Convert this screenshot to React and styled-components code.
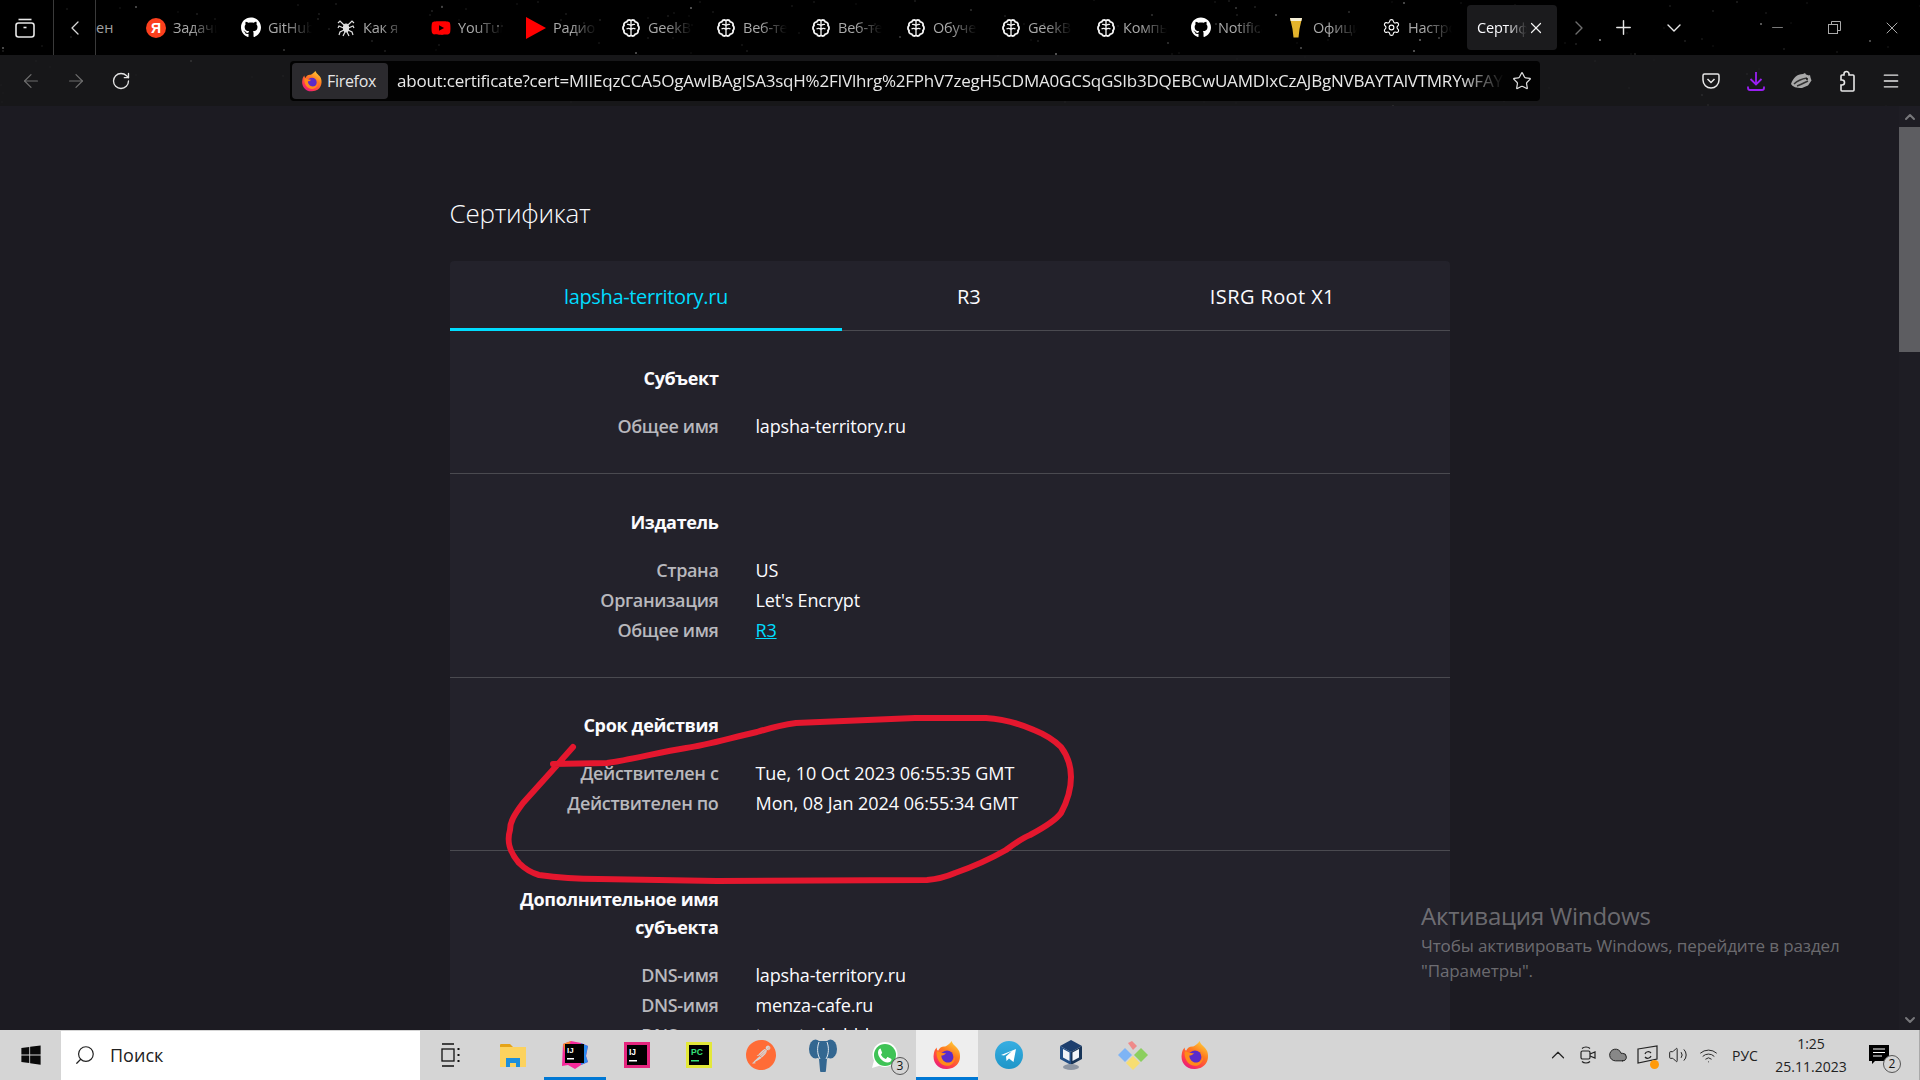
import React from 'react';
import styled, { createGlobalStyle } from 'styled-components';
import {
  ArrowLeft, ArrowRight, RotateCw, Star, Menu, Settings, Plus, X, Minus,
  ChevronLeft, ChevronRight, ChevronDown, ChevronUp, Search, Cloud, Volume2, Wifi,
} from 'lucide-react';
import { FaGithub, FaWindows, FaYoutube } from 'react-icons/fa';
import { SiPostman } from 'react-icons/si';

const makeStars = (count, seed, alpha) => {
  let s = seed;
  const next = () => {
    s = (s * 16807) % 2147483647;
    return s / 2147483647;
  };
  const list = [];
  for (let i = 0; i < count; i++) {
    const x = Math.round(next() * 1920);
    const y = Math.round(next() * 55);
    const r = next() > 0.8 ? 1.4 : 0.8;
    const a = (0.25 + next() * 0.6) * alpha;
    list.push(`radial-gradient(circle ${r}px at ${x}px ${y}px, rgba(255,255,255,${a.toFixed(2)}), transparent)`);
  }
  return list.join(',');
};

const GlobalStyle = createGlobalStyle`
  html, body {
    margin: 0;
    padding: 0;
    background: #1c1b22;
  }
  * {
    box-sizing: border-box;
  }
`;

const Screen = styled.div`
  position: relative;
  display: flex;
  flex-direction: column;
  width: 1920px;
  height: 1080px;
  overflow: hidden;
  font-family: 'Open Sans', 'Liberation Sans', sans-serif;
  color: #fbfbfe;
`;

const TabBar = styled.div`
  display: flex;
  align-items: center;
  height: 55px;
  flex: none;
  background-color: #000;
  background-image: ${makeStars(130, 4711, 1)};
`;

const ManagerSlot = styled.div`
  display: flex;
  align-items: center;
  justify-content: center;
  width: 54px;
  height: 55px;
  padding-right: 4px;
  border-right: 1px solid #3a3a3a;
  flex: none;
`;

const ScrollSlot = styled.div`
  display: flex;
  align-items: center;
  justify-content: center;
  width: 42px;
  height: 55px;
  border-right: 1px solid #3a3a3a;
  flex: none;
  color: #d8d8d8;
`;

const TabStub = styled.div`
  width: 41px;
  flex: none;
  font-size: 14.5px;
  color: #a0a0a0;
  white-space: nowrap;
`;

const Tab = styled.div`
  display: flex;
  align-items: center;
  gap: 7px;
  width: 95px;
  height: 45px;
  flex: none;
  padding-left: 9px;
`;

const TabIcon = styled.div`
  display: flex;
  align-items: center;
  justify-content: center;
  width: 20px;
  height: 24px;
  flex: none;
  color: #fff;
`;

const TabLabel = styled.div`
  width: 44px;
  overflow: hidden;
  white-space: nowrap;
  font-size: 14.5px;
  letter-spacing: -0.2px;
  color: #a8a8a8;
  -webkit-mask-image: linear-gradient(to right, #000 40%, transparent 100%);
  mask-image: linear-gradient(to right, #000 40%, transparent 100%);
`;

const ActiveTab = styled.div`
  display: flex;
  align-items: center;
  width: 90px;
  height: 45px;
  flex: none;
  padding-left: 10px;
  border-radius: 4px;
  background: #1b1b1d;
`;

const ActiveLabel = styled(TabLabel)`
  width: 50px;
  color: #fbfbfe;
  -webkit-mask-image: linear-gradient(to right, #000 60%, transparent 100%);
  mask-image: linear-gradient(to right, #000 60%, transparent 100%);
`;

const BarButton = styled.div`
  display: flex;
  align-items: center;
  justify-content: center;
  width: ${(p) => p.$w || 45}px;
  height: 45px;
  flex: none;
  color: ${(p) => p.$color || '#e8e8e8'};
`;

const WindowControls = styled.div`
  display: flex;
  margin-left: auto;
  color: #c9c9c9;
`;

const NavBar = styled.div`
  display: flex;
  align-items: center;
  height: 51px;
  flex: none;
  background-color: #171719;
  background-image: ${makeStars(60, 1999, 0.25)};
`;

const NavLeft = styled.div`
  display: flex;
  align-items: center;
  width: 290px;
  padding-left: 8px;
  flex: none;
`;

const UrlBar = styled.div`
  display: flex;
  align-items: center;
  width: 1250px;
  height: 40px;
  flex: none;
  padding-left: 2px;
  border-radius: 4px;
  background: #020202;
`;

const IdentityBox = styled.div`
  display: flex;
  align-items: center;
  gap: 4px;
  width: 96px;
  height: 36px;
  flex: none;
  padding-left: 9px;
  border-radius: 4px;
  background: #2b2a2e;
  font-size: 16px;
  letter-spacing: -0.3px;
  color: #e6e6e6;
`;

const UrlText = styled.div`
  width: 1107px;
  margin-left: 9px;
  overflow: hidden;
  white-space: nowrap;
  font-size: 17px;
  letter-spacing: -0.22px;
  color: #e8e8e8;
  -webkit-mask-image: linear-gradient(to right, #000 96%, transparent 100%);
  mask-image: linear-gradient(to right, #000 96%, transparent 100%);
`;

const StarSlot = styled.div`
  display: flex;
  justify-content: center;
  width: 36px;
  flex: none;
  color: #dedede;
`;

const NavRight = styled.div`
  display: flex;
  margin-left: auto;
  padding-right: 7px;
`;

const Viewport = styled.div`
  display: flex;
  flex: 1;
  min-height: 0;
  background: #1c1b22;
`;

const PageScroll = styled.main`
  flex: 1;
  overflow: hidden;
  padding-top: 89px;
`;

const Page = styled.div`
  width: 1000px;
  margin: 0 auto;
`;

const Title = styled.h1`
  margin: 0 0 30px;
  font-size: 26px;
  line-height: 36px;
  font-weight: 300;
  letter-spacing: -0.25px;
  color: #fbfbfe;
`;

const Card = styled.section`
  border-radius: 4px;
  background: #23222b;
`;

const TabList = styled.div`
  display: flex;
  height: 70px;
  border-bottom: 1px solid #4a4a50;
`;

const CertTab = styled.div`
  flex: 1 1 auto;
  display: flex;
  align-items: center;
  justify-content: center;
  height: 70px;
  padding: 3px 10px 0;
  border-bottom: 3px solid ${(p) => (p.$active ? '#00ddff' : 'transparent')};
  font-size: 20px;
  letter-spacing: ${(p) => p.$track}px;
  color: ${(p) => (p.$active ? '#00ddff' : '#fbfbfe')};
`;

const Section = styled.div`
  padding: ${(p) => p.$top || 33}px 0 32px;
  border-bottom: 1px solid #4a4a50;
`;

const SectionTitle = styled.h2`
  width: 269px;
  margin: 0 0 19px;
  font-size: 18px;
  line-height: 28px;
  font-weight: 700;
  text-align: right;
  letter-spacing: -0.35px;
  color: #fbfbfe;
`;

const Row = styled.div`
  display: grid;
  grid-template-columns: 269px 1fr;
  column-gap: 37px;
  height: 30px;
  align-items: center;
  font-size: 18px;
  letter-spacing: -0.17px;
`;

const Label = styled.span`
  font-weight: 600;
  text-align: right;
  letter-spacing: -0.35px;
  color: #b8b8bd;
`;

const Value = styled.span`
  color: #fbfbfe;
`;

const DateValue = styled(Value)`
  letter-spacing: -0.05px;
`;

const ValueLink = styled.a`
  color: #00ddff;
  text-decoration: underline;
`;

const Scrollbar = styled.div`
  display: flex;
  flex-direction: column;
  align-items: center;
  width: 21px;
  flex: none;
  background: #1e1d24;
  color: #77777b;
`;

const ScrollArrow = styled.div`
  display: flex;
  align-items: center;
  justify-content: center;
  height: 21px;
  flex: none;
`;

const ScrollThumb = styled.div`
  width: 100%;
  height: 225px;
  margin-bottom: auto;
  background: #5d5d61;
`;

const Taskbar = styled.footer`
  display: flex;
  align-items: center;
  height: 50px;
  flex: none;
  background: #d5d5d5;
  color: #111;
`;

const StartSlot = styled.div`
  display: flex;
  align-items: center;
  justify-content: center;
  width: 61px;
  height: 50px;
  flex: none;
`;

const SearchBox = styled.div`
  display: flex;
  align-items: center;
  gap: 14px;
  width: 359px;
  height: 49px;
  flex: none;
  padding-left: 13px;
  background: #fff;
  font-size: 18px;
  color: #222;
`;

const SearchGlyph = styled(Search)`
  transform: scaleX(-1);
`;

const TaskSlot = styled.div`
  position: relative;
  display: flex;
  align-items: center;
  justify-content: center;
  width: 62px;
  height: 50px;
  flex: none;
  background: ${(p) => (p.$active ? '#eeeeee' : 'transparent')};
  border-bottom: 3px solid ${(p) => (p.$open ? '#0078d4' : 'transparent')};
  padding-top: 3px;
`;

const CountBadge = styled.span`
  position: absolute;
  right: ${(p) => p.$right}px;
  bottom: ${(p) => p.$bottom}px;
  display: flex;
  align-items: center;
  justify-content: center;
  width: 18px;
  height: 18px;
  border: 1px solid #555;
  border-radius: 50%;
  background: #d5d5d5;
  font-size: 12px;
  line-height: 1;
  color: #111;
`;

const Tray = styled.div`
  display: flex;
  align-items: center;
  margin-left: auto;
  height: 50px;
`;

const TraySlot = styled.div`
  position: relative;
  display: flex;
  align-items: center;
  justify-content: center;
  width: 30px;
  height: 50px;
  flex: none;
  color: #222;
`;

const TrayDot = styled.span`
  position: absolute;
  right: 4px;
  bottom: 11px;
  width: 9px;
  height: 9px;
  border-radius: 50%;
  background: #ff9a0a;
`;

const LangSlot = styled.div`
  width: 44px;
  flex: none;
  font-size: 14px;
  text-align: center;
  color: #222;
`;

const Clock = styled.div`
  width: 88px;
  flex: none;
  font-size: 14px;
  line-height: 23px;
  text-align: center;
  color: #222;
`;

const NotifySlot = styled.div`
  position: relative;
  display: flex;
  align-items: center;
  width: 65px;
  height: 50px;
  flex: none;
  padding-left: 14px;
  border-right: 1px solid #aaa;
`;

const Watermark = styled.div`
  position: absolute;
  left: 1421px;
  top: 899px;
  color: rgba(255, 255, 255, 0.36);
`;

const WatermarkTitle = styled.div`
  font-size: 24px;
  line-height: 34px;
  letter-spacing: -0.2px;
`;

const WatermarkText = styled.div`
  width: 440px;
  font-size: 17px;
  line-height: 25px;
  letter-spacing: -0.1px;
`;

const Scribble = styled.svg`
  position: absolute;
  left: 0;
  top: 0;
  width: 1920px;
  height: 1080px;
  pointer-events: none;
`;

const FirefoxIcon = ({ size = 22, id = 'ff' }) => (
  <svg width={size} height={size} viewBox="0 0 32 32">
    <defs>
      <linearGradient id={id} x1="0.8" y1="0" x2="0.2" y2="1">
        <stop offset="0" stopColor="#ffd23a" />
        <stop offset="0.4" stopColor="#ff7a1f" />
        <stop offset="0.75" stopColor="#ff3c4c" />
        <stop offset="1" stopColor="#e31587" />
      </linearGradient>
    </defs>
    <path d="M21 1c.5 4 6 6 8 11 2.500 7 .5 18-13 19C6 31.500 0 23 2 14c.5-2 1-4 3-6 0 2 .5 3 1.500 3.500C8 8 11 6.500 14 7c2-1 5-3 7-6z" fill={`url(#${id})`} />
    <circle cx="16" cy="18" r="6.800" fill="#5b2bc9" />
    <path d="M5 12c3 0 5 2.500 10 2 -2 2-4 2.500-5 2.500 0 4 3 7.500 7 7.500 4.500 0 7-3 7.500-7 1 5-3 11-9 10.500C8 27 4 19 5 12z" fill="#ff8a1a" />
  </svg>
);

const IdeIcon = ({ letters, border, text = '#fff' }) => (
  <svg width="28" height="28" viewBox="0 0 28 28">
    <rect x="1" y="1" width="26" height="26" fill={border} />
    <rect x="4" y="4" width="20" height="20" fill="#000" />
    <text x="6" y="14" fontFamily="'Liberation Sans', sans-serif" fontWeight="700" fontSize="8.500" fill={text}>{letters}</text>
    <rect x="6" y="19" width="8" height="1.500" fill={text} />
  </svg>
);

const BrainIcon = () => (
  <svg width="18" height="18" viewBox="0 0 18 18" fill="none" stroke="#f4f4f4" strokeWidth="1.800">
    <path d="M9 1.500C7.500.8 5.500 1.200 4.700 2.800 2.800 3 1.500 4.800 2 6.500.6 7.800.6 10.200 2 11.500c-.5 1.800.8 3.500 2.700 3.700.8 1.600 2.800 2 4.300 1.300 1.500.7 3.500.3 4.300-1.300 1.900-.2 3.200-1.900 2.700-3.700 1.400-1.300 1.400-3.700 0-5 .5-1.700-.8-3.500-2.700-3.700C12.500 1.200 10.500.8 9 1.500z" />
    <path d="M9 1.500v15M5 5.500c1.500-.5 2.500 0 4 1M13 5.500c-1.500-.5-2.500 0-4 1M4.500 10c1.500-1 3-.8 4.500.5M13.500 10c-1.500-1-3-.8-4.500.5" strokeWidth="1.300" />
  </svg>
);

const SpiderIcon = () => (
  <svg width="18" height="20" viewBox="0 0 18 20" fill="none" stroke="#e0e0e0" strokeWidth="1.200">
    <ellipse cx="9" cy="10" rx="2.500" ry="4" fill="#e0e0e0" />
    <path d="M7 7 3 3 1 5M11 7l4-4 2 2M6.500 10 2 8 1 10M11.500 10 16 8l1 2M7 12l-4 2-1 3M11 12l4 2 1 3M8 14l-2 4M10 14l2 4" />
  </svg>
);

const BeerIcon = () => (
  <svg width="14" height="22" viewBox="0 0 14 22">
    <path d="M1 1h12l-2.500 11-1 8.500h-5l-1-8.500z" fill="#e3b32c" />
    <path d="M1 1h12l-.7 3H1.700z" fill="#f5efd8" />
  </svg>
);

const YandexIcon = () => (
  <svg width="20" height="20" viewBox="0 0 20 20">
    <circle cx="10" cy="10" r="10" fill="#fc3f1d" />
    <text x="10" y="15" textAnchor="middle" fontFamily="'Liberation Sans', sans-serif" fontWeight="700" fontSize="14" fill="#fff">Я</text>
  </svg>
);

const RadioIcon = () => (
  <svg width="20" height="22" viewBox="0 0 20 22">
    <path d="M0 0 20 11 0 22z" fill="#f00" />
  </svg>
);

const TabsIcon = () => (
  <svg width="20" height="20" viewBox="0 0 20 20" fill="none" stroke="#e8e8e8" strokeWidth="1.600">
    <rect x="1" y="5" width="18" height="14" rx="2.500" />
    <path d="M3.500 1.500h13" />
    <path d="M8.500 9.500h3" />
  </svg>
);

const PocketIcon = () => (
  <svg width="18" height="16" viewBox="0 0 18 16" fill="none" stroke="#e8e8e8" strokeWidth="1.500">
    <path d="M2.500 1h13A1.500 1.500 0 0 1 17 2.500V7a8 8 0 0 1-16 0V2.500A1.500 1.500 0 0 1 2.500 1z" />
    <path d="m5.500 6 3.500 3.500L12.500 6" />
  </svg>
);

const DownloadIcon = () => (
  <svg width="18" height="20" viewBox="0 0 18 20" fill="none" stroke="#9a1ff2" strokeWidth="1.800">
    <path d="M9 1v12M3.500 8 9 13.500 14.500 8" />
    <path d="M1 15.500V17a2 2 0 0 0 2 2h12a2 2 0 0 0 2-2v-1.500" />
  </svg>
);

const BadgerIcon = () => (
  <svg width="22" height="16" viewBox="0 0 22 16">
    <path d="M1 11C3 5 7 1 13 1l2-1 1 1.500 3 1 1-.5.500 2.500 1 3-3.500 5-6 2.500C6 15 3 14 1 11z" fill="#a8a8a8" />
    <path d="M4 11c3-3 7-5 13-6M7 13c3-1 7-3 11-5" stroke="#333" strokeWidth="1.500" fill="none" />
    <circle cx="17" cy="6" r="1" fill="#111" />
  </svg>
);

const PuzzleIcon = () => (
  <svg width="20" height="22" viewBox="0 0 20 22" fill="none" stroke="#e8e8e8" strokeWidth="1.600">
    <path d="M8 5V4a2.500 2.500 0 0 1 5 0v1h4a1 1 0 0 1 1 1v14a1 1 0 0 1-1 1H6a1 1 0 0 1-1-1v-5h1a2.500 2.500 0 0 0 0-5H5V6a1 1 0 0 1 1-1z" />
  </svg>
);

const TaskViewIcon = () => (
  <svg width="20" height="24" viewBox="0 0 20 24" fill="none" stroke="#111" strokeWidth="1.300">
    <path d="M1 1h12M1 23h12M1 4v0" />
    <rect x="1" y="6" width="12" height="12" />
    <path d="M17.500 5v2M17.500 11v2M17.500 17v2" strokeWidth="2" />
  </svg>
);

const ExplorerIcon = () => (
  <svg width="28" height="26" viewBox="0 0 28 26">
    <path d="M1 3a1 1 0 0 1 1-1h9l3 3H1z" fill="#e5a317" />
    <rect x="1" y="5" width="26" height="20" fill="#fcd25e" />
    <path d="M7 25v-9h14v9h-4v-4h-6v4z" fill="#1e8fdb" />
  </svg>
);

const RainbowIdeIcon = () => (
  <svg width="30" height="30" viewBox="0 0 30 30">
    <path d="M3 4 11 1l10 2 7 3-2 10 2 6-7 3-6 4-7-4-6 1z" fill="#f5289a" />
    <path d="M21 3l7 3-2 10 2 6-7 3z" fill="#2a8cf0" />
    <path d="M3 4l8-3-6 12z" fill="#f98b2a" />
    <rect x="5" y="4" width="19" height="19" fill="#000" />
    <text x="7" y="13" fontFamily="'Liberation Sans', sans-serif" fontWeight="700" fontSize="8" fill="#fff">IJ</text>
    <rect x="7" y="18" width="7" height="1.500" fill="#fff" />
  </svg>
);

const PostgresIcon = () => (
  <svg width="30" height="34" viewBox="0 0 30 34">
    <ellipse cx="7.500" cy="11" rx="6.500" ry="9.500" fill="#336791" />
    <ellipse cx="22.500" cy="11" rx="6.500" ry="9.500" fill="#336791" />
    <path d="M9 3h12l2 12-4 6-1 11a3 3 0 0 1-6 0l-1-11-4-6z" fill="#336791" />
    <path d="M11 4C9 9 9 16 12 21M19 4c2 5 2 12-1 17" stroke="#e2e8ee" strokeWidth="1" fill="none" />
  </svg>
);

const WhatsAppIcon = () => (
  <svg width="30" height="30" viewBox="0 0 30 30">
    <path d="M2 28l2-7.500A12.500 12.500 0 1 1 9.500 25.800z" fill="#fff" />
    <circle cx="15" cy="15" r="11" fill="#3fc356" />
    <path d="M10.500 8.500c-.8 0-2.500 1.500-2.500 4 0 3 2.200 5.700 2.600 6.200 1.800 2.300 4.500 3.800 7 3.800 2 0 3.900-1.300 3.900-2.800 0-.6-.1-.9-.4-1l-3-1.500c-.4-.2-.7-.1-1 .3l-1 1.200c-.2.300-.5.300-.9.100-1.800-.8-3.300-2.300-4.100-3.800-.2-.4 0-.6.200-.9l.7-.9c.2-.3.200-.5.100-.8l-1.200-3c-.1-.5-.3-.9-.4-.9z" fill="#fff" />
  </svg>
);

const TelegramIcon = () => (
  <svg width="28" height="28" viewBox="0 0 28 28">
    <defs>
      <linearGradient id="tg" x1="0.5" y1="0" x2="0.5" y2="1">
        <stop offset="0" stopColor="#37aee2" />
        <stop offset="1" stopColor="#1e96c8" />
      </linearGradient>
    </defs>
    <circle cx="14" cy="14" r="14" fill="url(#tg)" />
    <path d="M6 14 21 8l-2.500 13-4.500-3.500-2.500 2.500-.5-4.500 6-5.500-8 4.500z" fill="#fff" />
  </svg>
);

const VirtualBoxIcon = () => (
  <svg width="26" height="32" viewBox="0 0 26 32">
    <path d="M2 7 13 1l11 6-11 6z" fill="#1d3f6e" />
    <path d="M2 7v13l11 6V13z" fill="#234f86" />
    <path d="M24 7v13l-11 6V13z" fill="#183558" />
    <path d="M5 10v8.500l6.500 3.500v-8.500zM21 10v8.500L14.500 22v-8.500z" fill="#f1f4f8" />
    <ellipse cx="13" cy="28" rx="8" ry="3" fill="#8d96a3" />
  </svg>
);

const GitIcon = () => (
  <svg width="30" height="30" viewBox="0 0 30 30">
    <path d="M10 3l4-2 5 5-4 4z" fill="#ef8a8a" />
    <path d="M0 15l7-7 7 7-7 7z" fill="#7eb4f5" />
    <path d="M16 15l7-7 7 7-7 7z" fill="#8ccf5f" />
    <path d="M8 23l7-7 7 7-7 7z" fill="#f7dd72" />
  </svg>
);

const MeetIcon = () => (
  <svg width="18" height="20" viewBox="0 0 18 20" fill="none" stroke="#222" strokeWidth="1.200">
    <rect x="2" y="6" width="9" height="8" rx="1.500" />
    <path d="m11 9 5-2v6l-5-2M3 3.500c2-2 6-2 8 0M3 16.500c2 2 6 2 8 0" />
  </svg>
);

const SyncIcon = () => (
  <svg width="22" height="20" viewBox="0 0 22 20" fill="none" stroke="#222" strokeWidth="1.200">
    <path d="M1 4 20 1v13L1 18z" />
    <path d="M14 8a3.500 3.500 0 0 0-6 1M8 12a3.500 3.500 0 0 0 6-1" />
  </svg>
);

const NotifyIcon = () => (
  <svg width="20" height="20" viewBox="0 0 20 20">
    <path d="M0 0h20v16H6l-3 3v-3H0z" fill="#000" />
    <path d="M4 4h12M4 7.500h12M4 11h9" stroke="#fff" strokeWidth="1" />
  </svg>
);

const tabs = [
  { icon: <YandexIcon />, title: 'Задачи' },
  { icon: <FaGithub size={21} />, title: 'GitHub' },
  { icon: <SpiderIcon />, title: 'Как я' },
  { icon: <FaYoutube size={20} color="#f00" />, title: 'YouTube' },
  { icon: <RadioIcon />, title: 'Радио' },
  { icon: <BrainIcon />, title: 'GeekBrains' },
  { icon: <BrainIcon />, title: 'Веб-технологии' },
  { icon: <BrainIcon />, title: 'Веб-технологии' },
  { icon: <BrainIcon />, title: 'Обучение' },
  { icon: <BrainIcon />, title: 'GeekBrains' },
  { icon: <BrainIcon />, title: 'Компьютер' },
  { icon: <FaGithub size={21} />, title: 'Notifications' },
  { icon: <BeerIcon />, title: 'Официальный' },
  { icon: <Settings size={19} strokeWidth={1.4} />, title: 'Настройки' },
];

const certUrl =
  'about:certificate?cert=MIIEqzCCA5OgAwIBAgISA3sqH%2FIVlhrg%2FPhV7zegH5CDMA0GCSqGSIb3DQEBCwUAMDIxCzAJBgNVBAYTAlVTMRYwFAYD';

const scribblePath =
  'M573 747 C566 755 561 760 559 763 L523 803 C514 815 510 822 510 830 C507 840 508 850 519 863 C526 870 532 873 539 875 ' +
  'C560 878 580 879 599 879 L717 881 L927 880 C940 879 948 876 955 873 C975 866 992 858 1006 850 C1014 844 1022 838 1030 835 ' +
  'C1045 827 1056 820 1061 813 C1068 800 1071 790 1071 777 C1071 765 1067 755 1061 747 C1052 738 1044 734 1034 730 ' +
  'C1018 723 1002 719 986 718 L915 718 L796 723 C782 725 770 728 757 732 C730 738 708 745 686 748 C660 752 630 760 607 763 L553 764';

const App = () => {
  return (
    <Screen>
      <GlobalStyle />
      <TabBar>
        <ManagerSlot><TabsIcon /></ManagerSlot>
        <ScrollSlot><ChevronLeft size={24} strokeWidth={1.3} /></ScrollSlot>
        <TabStub>ен</TabStub>
        {tabs.map((tab, i) => (
          <Tab key={i}>
            <TabIcon>{tab.icon}</TabIcon>
            <TabLabel>{tab.title}</TabLabel>
          </Tab>
        ))}
        <ActiveTab>
          <ActiveLabel>Сертификат</ActiveLabel>
          <X size={18} strokeWidth={1.6} color="#f4f4f4" />
        </ActiveTab>
        <BarButton $w={44} $color="#6e6e6e"><ChevronRight size={24} strokeWidth={1.4} /></BarButton>
        <BarButton><Plus size={23} strokeWidth={1.5} /></BarButton>
        <BarButton $w={55}><ChevronDown size={24} strokeWidth={1.4} /></BarButton>
        <WindowControls>
          <BarButton $w={57} $color="#aaa"><Minus size={17} strokeWidth={1} /></BarButton>
          <BarButton $w={57} $color="#aaa">
            <svg width="13" height="13" viewBox="0 0 13 13" fill="none" stroke="currentColor">
              <path d="M3.500 3V.5h9v9H10" />
              <rect x="0.500" y="3.500" width="9" height="9" />
            </svg>
          </BarButton>
          <BarButton $w={57} $color="#ccc"><X size={20} strokeWidth={1} /></BarButton>
        </WindowControls>
      </TabBar>

      <NavBar>
        <NavLeft>
          <BarButton $color="#6f6f6f"><ArrowLeft size={22} strokeWidth={1.3} /></BarButton>
          <BarButton $color="#6f6f6f"><ArrowRight size={22} strokeWidth={1.3} /></BarButton>
          <BarButton $color="#e4e4e4"><RotateCw size={20} strokeWidth={1.6} /></BarButton>
        </NavLeft>
        <UrlBar>
          <IdentityBox>
            <FirefoxIcon size={22} id="ff-nav" />
            Firefox
          </IdentityBox>
          <UrlText>{certUrl}</UrlText>
          <StarSlot><Star size={20} strokeWidth={1.5} /></StarSlot>
        </UrlBar>
        <NavRight>
          <BarButton><PocketIcon /></BarButton>
          <BarButton><DownloadIcon /></BarButton>
          <BarButton><BadgerIcon /></BarButton>
          <BarButton><PuzzleIcon /></BarButton>
          <BarButton><Menu size={20} strokeWidth={1.6} /></BarButton>
        </NavRight>
      </NavBar>

      <Viewport>
        <PageScroll>
          <Page>
            <Title>Сертификат</Title>
            <Card>
              <TabList>
                <CertTab $active $track={-0.35}>lapsha-territory.ru</CertTab>
                <CertTab $track={0}>R3</CertTab>
                <CertTab $track={0.4}>ISRG Root X1</CertTab>
              </TabList>
              <Section>
                <SectionTitle>Субъект</SectionTitle>
                <Row><Label>Общее имя</Label><Value>lapsha-territory.ru</Value></Row>
              </Section>
              <Section $top={34}>
                <SectionTitle>Издатель</SectionTitle>
                <Row><Label>Страна</Label><Value>US</Value></Row>
                <Row><Label>Организация</Label><Value>Let's Encrypt</Value></Row>
                <Row><Label>Общее имя</Label><ValueLink href="#r3">R3</ValueLink></Row>
              </Section>
              <Section>
                <SectionTitle>Срок действия</SectionTitle>
                <Row><Label>Действителен с</Label><DateValue>Tue, 10 Oct 2023 06:55:35 GMT</DateValue></Row>
                <Row><Label>Действителен по</Label><DateValue>Mon, 08 Jan 2024 06:55:34 GMT</DateValue></Row>
              </Section>
              <Section $top={34}>
                <SectionTitle>Дополнительное имя субъекта</SectionTitle>
                <Row><Label>DNS-имя</Label><Value>lapsha-territory.ru</Value></Row>
                <Row><Label>DNS-имя</Label><Value>menza-cafe.ru</Value></Row>
                <Row><Label>DNS-имя</Label><Value>tomato-bubble.ru</Value></Row>
              </Section>
            </Card>
          </Page>
        </PageScroll>
        <Scrollbar>
          <ScrollArrow><ChevronUp size={16} strokeWidth={3} /></ScrollArrow>
          <ScrollThumb />
          <ScrollArrow><ChevronDown size={16} strokeWidth={3} /></ScrollArrow>
        </Scrollbar>
      </Viewport>

      <Taskbar>
        <StartSlot><FaWindows size={22} color="#0a0a0a" /></StartSlot>
        <SearchBox>
          <SearchGlyph size={22} strokeWidth={1.3} />
          Поиск
        </SearchBox>
        <TaskSlot><TaskViewIcon /></TaskSlot>
        <TaskSlot><ExplorerIcon /></TaskSlot>
        <TaskSlot $open><RainbowIdeIcon /></TaskSlot>
        <TaskSlot><IdeIcon letters="IJ" border="#e5267f" /></TaskSlot>
        <TaskSlot><IdeIcon letters="PC" border="#e3e83a" text="#35e07a" /></TaskSlot>
        <TaskSlot><SiPostman size={30} color="#ff6c37" /></TaskSlot>
        <TaskSlot><PostgresIcon /></TaskSlot>
        <TaskSlot>
          <WhatsAppIcon />
          <CountBadge $right={7} $bottom={2}>3</CountBadge>
        </TaskSlot>
        <TaskSlot $active $open><FirefoxIcon size={30} id="ff-task" /></TaskSlot>
        <TaskSlot><TelegramIcon /></TaskSlot>
        <TaskSlot><VirtualBoxIcon /></TaskSlot>
        <TaskSlot><GitIcon /></TaskSlot>
        <TaskSlot><FirefoxIcon size={30} id="ff-task2" /></TaskSlot>
        <Tray>
          <TraySlot><ChevronUp size={22} strokeWidth={1.3} /></TraySlot>
          <TraySlot><MeetIcon /></TraySlot>
          <TraySlot><Cloud size={20} strokeWidth={1.2} fill="#888" /></TraySlot>
          <TraySlot><SyncIcon /><TrayDot /></TraySlot>
          <TraySlot><Volume2 size={20} strokeWidth={1.2} /></TraySlot>
          <TraySlot><Wifi size={19} strokeWidth={1.2} /></TraySlot>
          <LangSlot>РУС</LangSlot>
          <Clock>1:25<br />25.11.2023</Clock>
          <NotifySlot>
            <NotifyIcon />
            <CountBadge $right={18} $bottom={7}>2</CountBadge>
          </NotifySlot>
        </Tray>
      </Taskbar>

      <Watermark>
        <WatermarkTitle>Активация Windows</WatermarkTitle>
        <WatermarkText>Чтобы активировать Windows, перейдите в раздел "Параметры".</WatermarkText>
      </Watermark>

      <Scribble viewBox="0 0 1920 1080" fill="none">
        <path d={scribblePath} stroke="#e4172e" strokeWidth="6" strokeLinecap="round" strokeLinejoin="round" />
      </Scribble>
    </Screen>
  );
};

export default App;
